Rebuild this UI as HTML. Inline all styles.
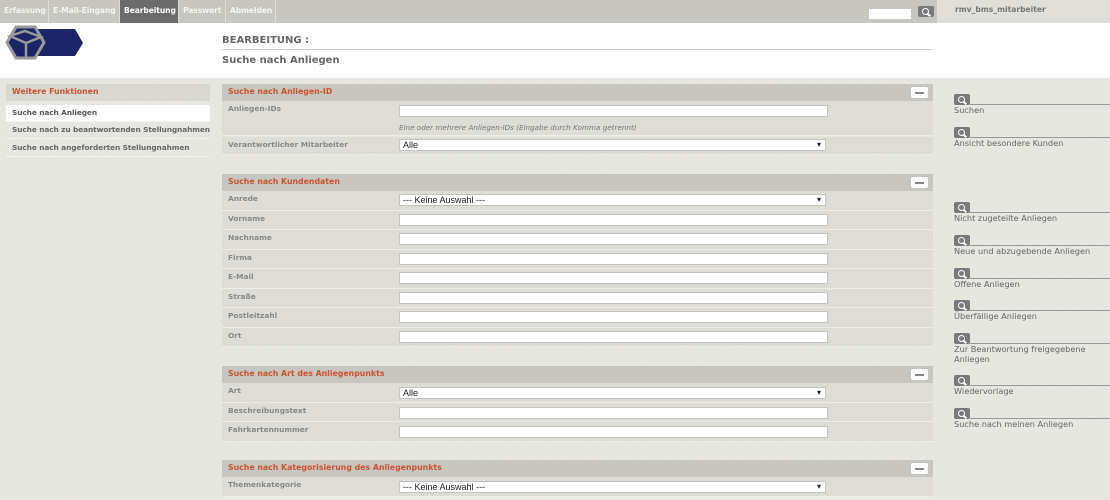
<!DOCTYPE html>
<html><head><meta charset="utf-8"><style>
*{margin:0;padding:0;box-sizing:border-box}
body{width:1110px;height:500px;overflow:hidden;position:relative;font-family:"DejaVu Sans",Verdana,sans-serif;background:repeating-linear-gradient(135deg,#e8e7e1 0 2px,#e6e5df 2px 4px);color:#777}
.a{position:absolute}
.nav{left:0;top:0;width:1110px;height:23px;background:#c8c6c0}
.tab{position:absolute;top:0;height:23px;font-size:7.6px;font-weight:bold;color:#f4f4f0;line-height:22px;padding-left:4px;border-right:1px solid #dddcd6;white-space:nowrap;overflow:hidden;letter-spacing:-0.1px}
.hdr{left:0;top:23px;width:1110px;height:55px;background:#fff}
.bh{font-size:7.8px;font-weight:bold;color:#c9542e;line-height:16px;padding-left:6px;white-space:nowrap}
.lab{position:absolute;left:6px;font-size:7.4px;font-weight:bold;color:#888;white-space:nowrap}
.row{position:absolute;left:222px;width:711px;background:#dddcd6;border-bottom:1px solid #eeede8}
.inp{position:absolute;left:177px;width:429px;height:12px;background:#fff;border:1px solid #c4c3be;font-family:"Liberation Sans",sans-serif;font-size:9px;color:#222;line-height:10px;padding-left:3px}
.sel{width:427px}
.sel::after{content:"▾";position:absolute;right:4px;top:0;font-size:8px;color:#222}
.sh{position:absolute;left:222px;width:711px;height:17px;background:#c8c6c0}
.min{position:absolute;right:5px;top:3px;width:17px;height:11px;background:#fff;border-radius:2px}
.min::after{content:"";position:absolute;left:4px;top:5px;width:9px;height:1.5px;background:#888}
.li{position:absolute;left:6px;width:204px;height:17px;font-size:7.4px;font-weight:bold;color:#666;line-height:16px;padding-left:6px;border-bottom:1px solid #f4f3ef;white-space:nowrap;letter-spacing:-0.1px}
.ri{position:absolute;left:954px;width:156px}
.ico{position:absolute;left:0;top:0;width:16px;height:11px;background:#7a7a7a;border-radius:2px}
.ico::before{content:"";position:absolute;left:4px;top:1.5px;width:5px;height:5px;border:1.3px solid #fff;border-radius:50%}
.ico::after{content:"";position:absolute;left:9px;top:7.5px;width:4px;height:1.5px;background:#fff;transform:rotate(40deg)}
.ln{position:absolute;left:16px;top:10px;right:0;height:1px;background:#999}
.rt{position:absolute;left:0;top:12px;font-size:8.2px;color:#666;line-height:9.5px;width:150px}
</style></head><body>
<div class="a nav"></div>
<div class="tab" style="left:0;width:49px">Erfassung</div>
<div class="tab" style="left:49px;width:71px">E-Mail-Eingang</div>
<div class="tab" style="left:120px;width:59px;background:#6b6b6b;color:#fff">Bearbeitung</div>
<div class="tab" style="left:179px;width:47px">Passwort</div>
<div class="tab" style="left:226px;width:50px">Abmelden</div>
<div class="a" style="left:869px;top:9px;width:42px;height:10px;background:#fff"></div>
<div class="a" style="left:918px;top:6px;width:16px;height:11px"><div class="ico"></div></div>
<div class="a" style="left:937px;top:0;width:173px;height:23px;background:#dfded9;font-size:7.6px;font-weight:bold;color:#777;line-height:20px;padding-left:18px">rmv_bms_mitarbeiter</div>
<div class="a hdr"></div>
<svg class="a" style="left:5px;top:25px" width="80" height="35" viewBox="0 0 80 35">
<polygon points="22,4 70,4 78,18 70,31 22,31" fill="#1a2466"/>
<polygon points="11,2 30,2 39,17.5 30,33 11,33 2,17.5" fill="#1a2466" stroke="#999" stroke-width="3"/>
<path d="M5,11 L20,6 L36,12 L21,18 Z M21,18 L21,33" fill="none" stroke="#999" stroke-width="2.5"/>
</svg>
<div class="a" style="left:222px;top:35px;font-size:10px;font-weight:bold;color:#666">BEARBEITUNG :</div>
<div class="a" style="left:222px;top:49px;width:711px;height:1px;background:#ccc"></div>
<div class="a" style="left:222px;top:55px;font-size:10px;font-weight:bold;color:#666">Suche nach Anliegen</div>

<div class="a" style="left:6px;top:84px;width:204px;height:17px;background:#d8d7d1"><div class="bh">Weitere Funktionen</div></div>
<div class="li" style="top:105px;background:#fff;color:#555">Suche nach Anliegen</div>
<div class="li" style="top:122px">Suche nach zu beantwortenden Stellungnahmen</div>
<div class="li" style="top:140px">Suche nach angeforderten Stellungnahmen</div>

<div class="sh" style="top:84px"><div class="bh">Suche nach Anliegen-ID</div><div class="min"></div></div>
<div class="row" style="top:101px;height:35px"><div class="lab" style="top:3px">Anliegen-IDs</div><div class="inp" style="top:4px"></div><div class="a" style="left:177px;top:22px;font-size:7.2px;font-style:italic;color:#777;white-space:nowrap">Eine oder mehrere Anliegen-IDs (Eingabe durch Komma getrennt)</div></div>
<div class="row" style="top:137px;height:18px"><div class="lab" style="top:3px">Verantwortlicher Mitarbeiter</div><div class="inp sel" style="top:2px">Alle</div></div>

<div class="sh" style="top:174px"><div class="bh">Suche nach Kundendaten</div><div class="min"></div></div>
<div class="row" style="top:191px;height:19.5px"><div class="lab" style="top:3px">Anrede</div><div class="inp sel" style="top:3px">--- Keine Auswahl ---</div></div>
<div class="row" style="top:210.5px;height:19.5px"><div class="lab" style="top:3px">Vorname</div><div class="inp" style="top:3px"></div></div>
<div class="row" style="top:230px;height:19.5px"><div class="lab" style="top:3px">Nachname</div><div class="inp" style="top:3px"></div></div>
<div class="row" style="top:249.5px;height:19.5px"><div class="lab" style="top:3px">Firma</div><div class="inp" style="top:3px"></div></div>
<div class="row" style="top:269px;height:19.5px"><div class="lab" style="top:3px">E-Mail</div><div class="inp" style="top:3px"></div></div>
<div class="row" style="top:288.5px;height:19.5px"><div class="lab" style="top:3px">Straße</div><div class="inp" style="top:3px"></div></div>
<div class="row" style="top:308px;height:19.5px"><div class="lab" style="top:3px">Postleitzahl</div><div class="inp" style="top:3px"></div></div>
<div class="row" style="top:327.5px;height:19.5px"><div class="lab" style="top:3px">Ort</div><div class="inp" style="top:3px"></div></div>

<div class="sh" style="top:366px"><div class="bh">Suche nach Art des Anliegenpunkts</div><div class="min"></div></div>
<div class="row" style="top:383px;height:19.5px"><div class="lab" style="top:3px">Art</div><div class="inp sel" style="top:4px">Alle</div></div>
<div class="row" style="top:402.5px;height:19.5px"><div class="lab" style="top:3px">Beschreibungstext</div><div class="inp" style="top:4px"></div></div>
<div class="row" style="top:422px;height:19.5px"><div class="lab" style="top:3px">Fahrkartennummer</div><div class="inp" style="top:4px"></div></div>

<div class="sh" style="top:460px"><div class="bh">Suche nach Kategorisierung des Anliegenpunkts</div><div class="min"></div></div>
<div class="row" style="top:477px;height:20px"><div class="lab" style="top:3px">Themenkategorie</div><div class="inp sel" style="top:4px">--- Keine Auswahl ---</div></div>

<div class="ri" style="top:94px"><div class="ico"></div><div class="ln"></div><div class="rt">Suchen</div></div>
<div class="ri" style="top:127px"><div class="ico"></div><div class="ln"></div><div class="rt">Ansicht besondere Kunden</div></div>
<div class="ri" style="top:202px"><div class="ico"></div><div class="ln"></div><div class="rt">Nicht zugeteilte Anliegen</div></div>
<div class="ri" style="top:235px"><div class="ico"></div><div class="ln"></div><div class="rt">Neue und abzugebende Anliegen</div></div>
<div class="ri" style="top:268px"><div class="ico"></div><div class="ln"></div><div class="rt">Offene Anliegen</div></div>
<div class="ri" style="top:300px"><div class="ico"></div><div class="ln"></div><div class="rt">Überfällige Anliegen</div></div>
<div class="ri" style="top:333px"><div class="ico"></div><div class="ln"></div><div class="rt">Zur Beantwortung freigegebene Anliegen</div></div>
<div class="ri" style="top:375px"><div class="ico"></div><div class="ln"></div><div class="rt">Wiedervorlage</div></div>
<div class="ri" style="top:408px"><div class="ico"></div><div class="ln"></div><div class="rt">Suche nach meinen Anliegen</div></div>
</body></html>
